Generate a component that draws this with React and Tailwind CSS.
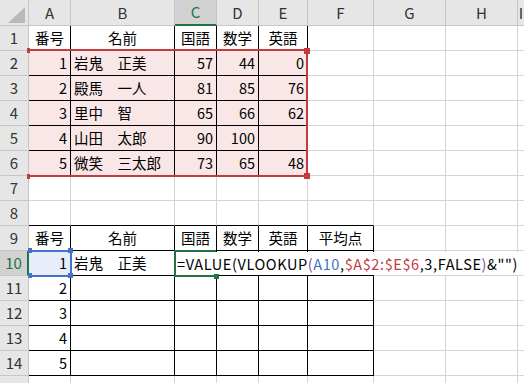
const COLS = ['A', 'B', 'C', 'D', 'E', 'F', 'G', 'H', 'I'];

const UPPER = {
  1: ['番号', '名前', '国語', '数学', '英語'],
  2: ['1', '岩鬼　正美', '57', '44', '0'],
  3: ['2', '殿馬　一人', '81', '85', '76'],
  4: ['3', '里中　智', '65', '66', '62'],
  5: ['4', '山田　太郎', '90', '100', ''],
  6: ['5', '微笑　三太郎', '73', '65', '48'],
};

const LOWER = {
  9: ['番号', '名前', '国語', '数学', '英語', '平均点'],
  10: ['1', '岩鬼　正美'],
  11: ['2'],
  12: ['3'],
  13: ['4'],
  14: ['5'],
};

function cellContent(r, c) {
  if (UPPER[r]) return UPPER[r][c - 1] ?? '';
  if (LOWER[r]) return LOWER[r][c - 1] ?? '';
  return '';
}

function align(r, c) {
  if (r === 1 || r === 9) return 'justify-center';
  if (c === 2) return 'justify-start';
  return 'justify-end';
}

function DataCell({ r, c }) {
  const rightBlack = (r >= 1 && r <= 6 && c <= 5) || (r >= 9 && r <= 14 && c <= 6);
  const bottomBlack = (r >= 1 && r <= 5 && c <= 5) || (r >= 8 && r <= 14 && c <= 6);
  const pink = r >= 2 && r <= 6 && c <= 5;
  const blue = r === 10 && c === 1;
  const bg = pink ? 'bg-[#f9e7e7]' : blue ? 'bg-[#e8eef9]' : 'bg-white';
  return (
    <div
      className={[
        'flex items-center overflow-hidden whitespace-nowrap border-r border-b px-[3px] pt-[1px] text-[14.5px] leading-none text-black',
        rightBlack ? 'border-r-black' : 'border-r-[#d4d4d4]',
        bottomBlack ? 'border-b-black' : 'border-b-[#d4d4d4]',
        bg,
        align(r, c),
      ].join(' ')}
    >
      {cellContent(r, c)}
    </div>
  );
}

export default function App() {
  const cells = [];
  cells.push(
    <div key="corner" className="flex items-end justify-end border-r border-b border-[#c6c6c6] bg-[#e6e6e6] pr-[3px] pb-[2px]">
      <svg width="17" height="16">
        <polygon points="17,0 17,16 0,16" fill="#b9b9b9" />
      </svg>
    </div>
  );
  COLS.forEach((l) => {
    const sel = l === 'C';
    cells.push(
      <div
        key={'h' + l}
        className={
          sel
            ? 'flex items-center justify-center border-r border-r-[#c6c6c6] border-b-2 border-b-[#217346] bg-[#d2d2d2] pt-[1px] text-[15px] text-[#217346]'
            : 'flex items-center justify-center border-r border-b border-[#c6c6c6] bg-[#e6e6e6] pt-[1px] text-[15px] text-[#333]'
        }
      >
        {l}
      </div>
    );
  });
  for (let r = 1; r <= 15; r++) {
    const sel = r === 10;
    cells.push(
      <div
        key={'r' + r}
        className={
          sel
            ? 'flex items-center justify-center border-r-2 border-r-[#217346] border-b border-b-[#c6c6c6] bg-[#d2d2d2] pt-[1px] text-[15px] text-[#217346]'
            : 'flex items-center justify-center border-r border-b border-[#c6c6c6] bg-[#e6e6e6] pt-[1px] text-[15px] text-[#333]'
        }
      >
        {r < 15 ? r : ''}
      </div>
    );
    for (let c = 1; c <= 9; c++) {
      cells.push(<DataCell key={r + '-' + c} r={r} c={c} />);
    }
  }

  return (
    <div className="relative h-[383px] w-[524px] overflow-hidden bg-white font-['Noto_Sans_CJK_JP',sans-serif]">
      <div className="grid grid-cols-[29px_42px_104px_42px_42px_49px_66px_72px_72px_1fr] grid-rows-[26px_repeat(15,25px)]">
        {cells}
      </div>

      {/* red range reference $A$2:$E$6 */}
      <div className="pointer-events-none absolute left-[29px] top-[49px] h-[128px] w-[279px] border-t-2 border-r-2 border-b-2 border-[#c43b3f]">
        <div className="absolute -left-[2px] -top-[3px] h-[5px] w-[3px] bg-[#c43b3f]" />
        <div className="absolute -right-[4px] -top-[3px] h-[6px] w-[6px] bg-[#c43b3f]" />
        <div className="absolute -bottom-[4px] -left-[2px] h-[5px] w-[3px] bg-[#c43b3f]" />
        <div className="absolute -bottom-[4px] -right-[4px] h-[6px] w-[6px] bg-[#c43b3f]" />
      </div>

      {/* blue reference A10 */}
      <div className="pointer-events-none absolute left-[29px] top-[250px] h-[27px] w-[43px] border-t-2 border-r-2 border-b-2 border-[#4472c4]">
        <div className="absolute -left-[1px] -top-[4px] h-[5px] w-[4px] bg-[#4472c4]" />
        <div className="absolute -right-[3px] -top-[4px] h-[5px] w-[5px] bg-[#4472c4]" />
        <div className="absolute -bottom-[3px] -left-[1px] h-[5px] w-[4px] bg-[#4472c4]" />
        <div className="absolute -bottom-[3px] -right-[3px] h-[5px] w-[5px] bg-[#4472c4]" />
      </div>

      {/* formula being edited in C10, overflowing to the right */}
      <div className="absolute left-[174px] top-[250px] h-[27px] w-[350px]">
        <div className="flex h-full flex-col border-l-2 border-[#217346] pt-[2px]">
          <div className="flex h-[23px] items-center whitespace-nowrap bg-white pl-[1px] pt-[1px] text-[14.5px] leading-none tracking-[0.6px] text-black">
            <span>=VALUE(VLOOKUP</span>
            <span className="text-[#7a4fa8]">(</span>
            <span className="text-[#3f6fc6]">A10</span>
            <span>,</span>
            <span className="text-[#c43b3f]">$A$2:$E$6</span>
            <span>,3,FALSE</span>
            <span className="text-[#7a4fa8]">)</span>
            <span>&amp;"")</span>
          </div>
        </div>
        <div className="absolute left-0 top-0 h-[2px] w-[42px] bg-[#217346]" />
        <div className="absolute bottom-0 left-0 h-[2px] w-[40px] bg-[#217346]" />
        <div className="absolute -bottom-[2px] left-[40px] h-[5px] w-[5px] bg-[#217346]" />
      </div>
    </div>
  );
}
